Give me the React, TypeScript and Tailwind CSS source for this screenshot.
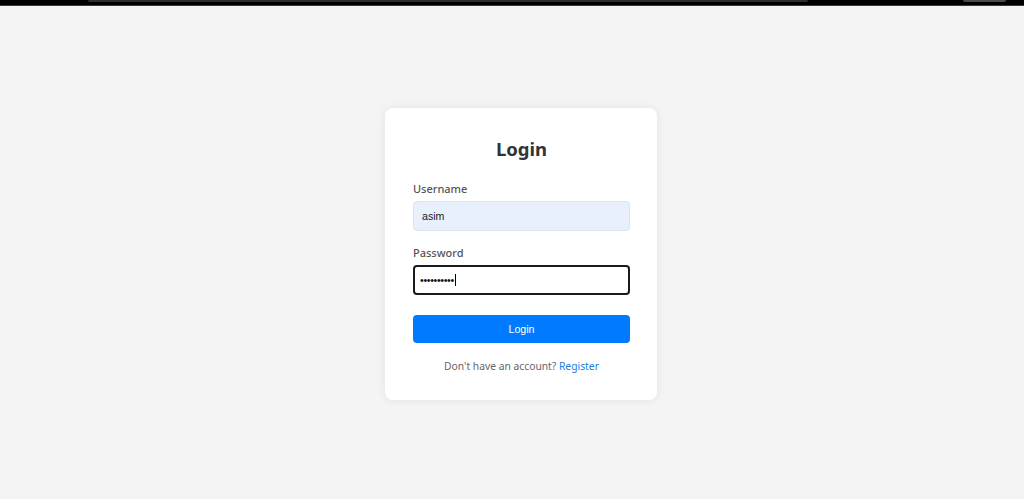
import React from "react";

export default function App() {
  return (
    <div className="min-h-[499px] w-full bg-[#f4f4f4]" style={{ fontFamily: '"Noto Sans", "Open Sans", sans-serif' }}>
      <div className="flex h-[6px] w-full items-start border-b border-[#3a3a3a] bg-black">
        <div className="ml-[88px] h-[2px] w-[720px] rounded-b-sm bg-[#2e2e2e]" />
        <div className="ml-[155px] h-[2px] w-[43px] rounded-b-sm bg-[#4a4a4a]" />
      </div>
      <main className="flex justify-center pl-[18px] pt-[102px]">
        <div className="w-[272px] rounded-lg bg-white pb-[26px] pl-[28px] pr-[27px] pt-[29px] shadow-[0_0_10px_rgba(0,0,0,0.08)]">
          <h2 className="h-[24px] text-center text-[18.5px] font-bold leading-[24px] text-[#333]">Login</h2>
          <form className="flex flex-col" onSubmit={(e) => e.preventDefault()}>
            <label className="mt-[20px] block h-[16px] text-[11px] font-medium leading-[16px] text-[#555]">Username</label>
            <input
              type="text"
              defaultValue="asim"
              className="mt-[4px] h-[30px] w-full rounded-[4px] border border-[#dde3ec] bg-[#e8f0fe] px-[8px] text-[10.67px] text-[#222] outline-none"
              style={{ fontFamily: '"Liberation Sans", Arial, sans-serif' }}
            />
            <label className="mt-[14px] block h-[16px] text-[11px] font-medium leading-[16px] text-[#555]">Password</label>
            <div
              className="mt-[4px] flex h-[30px] w-full items-center rounded-[4px] border-2 border-[#1a1a1a] bg-white px-[5px] text-[10.67px] text-[#111]"
              style={{ fontFamily: '"Liberation Sans", Arial, sans-serif' }}
            >
              <span className="tracking-[-0.35px]">••••••••••</span>
              <span className="ml-[1px] h-[12px] w-[1px] bg-black" />
            </div>
            <button
              type="submit"
              className="mt-[20px] h-[28px] w-full rounded-[4px] bg-[#007bff] text-[10.67px] text-white"
              style={{ fontFamily: '"Liberation Sans", Arial, sans-serif' }}
            >
              Login
            </button>
            <p className="mt-[15px] h-[16px] text-center text-[10.3px] leading-[16px] text-[#666]">
              Don't have an account? <a href="#" className="text-[#1a7fe0]">Register</a>
            </p>
          </form>
        </div>
      </main>
    </div>
  );
}
